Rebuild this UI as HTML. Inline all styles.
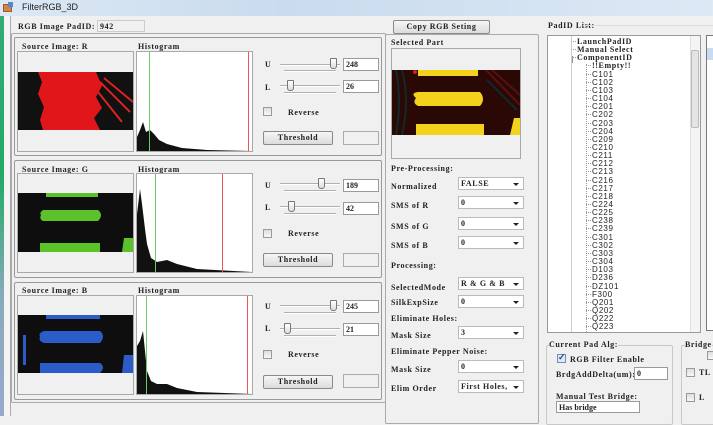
<!DOCTYPE html>
<html><head><meta charset="utf-8"><style>
*{margin:0;padding:0;box-sizing:border-box}
body{width:713px;height:416px;overflow:hidden;background:#f0f0f0;position:relative;font-family:"Liberation Serif",serif;font-weight:bold;font-size:8px;color:#222}
div,span,svg{position:absolute}
.t{white-space:nowrap;line-height:9px;letter-spacing:0.6px}
.box{border:1px solid #a8a8a8;background:#f0f0f0}
.grp{border:1px solid #c8c8c8;border-radius:2px}
.in{background:#fff;border:1px solid #9a9a9a;font-size:8px;padding-left:2px;line-height:11px}
.btn{border:1px solid #8a8a8a;border-radius:2px;background:linear-gradient(#f6f6f6,#dcdcdc);text-align:center;line-height:12px;letter-spacing:0.6px}
.trk{height:2px;border-top:1px solid #b0b0b0;border-bottom:1px solid #fff}
.thumb{width:7px;height:11px;border:1px solid #777;border-radius:1px 1px 3px 3px;background:linear-gradient(#fff,#ddd)}
.cb{width:9px;height:9px;border:1px solid #9a9a9a;background:linear-gradient(#ddd,#f8f8f8)}
.cmb{background:#fff;border:1px solid #bbb;height:13px}
.cmb span{left:2px;top:1px}
.cmb i{position:absolute;right:4px;top:5px;border-left:3px solid transparent;border-right:3px solid transparent;border-top:3px solid #222}
</style></head><body>
<!-- title bar -->
<div style="left:0;top:0;width:713px;height:16px;background:linear-gradient(90deg,#dce8f4,#c9dbee 40%,#dde9f5)"></div>
<div style="left:3px;top:4px;width:9px;height:8px;background:#c84;border:1px solid #a53"></div>
<div style="left:8px;top:2px;width:5px;height:5px;background:#58c"></div>
<span class="t" style="left:22px;top:3px;font-family:'Liberation Sans',sans-serif;font-weight:normal;font-size:9px;letter-spacing:0">FilterRGB_3D</span>
<div style="left:0;top:16px;width:4px;height:400px;background:linear-gradient(#3a7,#2a6 40%,#8ab 70%,#9ac)"></div>
<div style="left:4px;top:16px;width:7px;height:400px;background:#f4f4f4;border-right:1px solid #aaa"></div>

<span class="t" style="left:18px;top:22px">RGB Image PadID:</span>
<div style="left:97px;top:20px;width:48px;height:12px;border:1px solid #ccc;background:#f0f0f0"></div>
<span class="t" style="left:100px;top:22px">942</span>

<!-- outer left frame -->
<div class="grp" style="left:11px;top:33px;width:375px;height:370px;border-color:#aaa"></div>

<!-- Panel R -->
<div class="grp" style="left:14px;top:37px;width:368px;height:119px;border-color:#999"></div>
<span class="t" style="left:22px;top:42px">Source Image: R</span>
<span class="t" style="left:138px;top:42px">Histogram</span>
<div class="box" style="left:17px;top:51px;width:117px;height:101px"></div>
<svg style="left:18px;top:72px" width="115" height="58"><rect width="115" height="58" fill="#e0161a"/><path d="M0 0H20L24 10 20 22 26 35 22 48 25 58H0Z M78 0H115V58H82L76 46 84 36 78 25 84 14Z" fill="#111"/><path d="M82 10L112 40M86 6L115 30M80 20L104 50" stroke="#d22" stroke-width="2"/></svg>
<div class="box" style="left:136px;top:51px;width:117px;height:101px;background:#fff"></div>
<svg style="left:137px;top:52px" width="115" height="99"><path d="M0 99V85L3 78 6 70 9 80 13 78 17 82 22 88 30 92 45 96 70 98 115 99Z" fill="#111"/><line x1="12.5" y1="0" x2="12.5" y2="99" stroke="#6c6"/><line x1="111.5" y1="0" x2="111.5" y2="99" stroke="#e55"/></svg>
<span class="t" style="left:265px;top:60px">U</span>
<div class="trk" style="left:280px;top:64px;width:60px"></div><div class="trk" style="left:284px;top:70px;width:52px"></div>
<div class="thumb" style="left:330px;top:58px"></div>
<div class="in" style="left:343px;top:58px;width:36px;height:13px">248</div>
<span class="t" style="left:265px;top:83px">L</span>
<div class="trk" style="left:280px;top:85px;width:60px"></div><div class="trk" style="left:284px;top:92px;width:52px"></div>
<div class="thumb" style="left:287px;top:80px"></div>
<div class="in" style="left:343px;top:80px;width:36px;height:13px">26</div>
<div class="cb" style="left:263px;top:107px"></div>
<span class="t" style="left:288px;top:108px">Reverse</span>
<div class="btn" style="left:263px;top:131px;width:70px;height:14px">Threshold</div>
<div style="left:343px;top:131px;width:36px;height:14px;border:1px solid #aaa"></div>

<!-- Panel G -->
<div class="grp" style="left:14px;top:160px;width:368px;height:118px;border-color:#999"></div>
<span class="t" style="left:22px;top:165px">Source Image: G</span>
<span class="t" style="left:138px;top:165px">Histogram</span>
<div class="box" style="left:17px;top:173px;width:117px;height:100px"></div>
<svg style="left:18px;top:193px" width="115" height="59"><rect width="115" height="59" fill="#0e0e0e"/><path d="M28 0H80V4H28Z M23 22Q21 20 25 17H80Q86 22 80 28H25Q21 26 23 22Z M22 50H82V59H22Z M106 45H115V59H104Z" fill="#5cc22a"/></svg>
<div class="box" style="left:136px;top:173px;width:117px;height:100px;background:#fff"></div>
<svg style="left:137px;top:174px" width="115" height="98"><path d="M0 98V40L3 15 5 30 8 55 10 70 14 84 20 88 30 86 40 90 60 95 115 98Z" fill="#111"/><line x1="18.5" y1="0" x2="18.5" y2="98" stroke="#6c6"/><line x1="85.5" y1="0" x2="85.5" y2="98" stroke="#e55"/></svg>
<span class="t" style="left:265px;top:181px">U</span>
<div class="trk" style="left:280px;top:183px;width:60px"></div><div class="trk" style="left:284px;top:190px;width:52px"></div>
<div class="thumb" style="left:318px;top:178px"></div>
<div class="in" style="left:343px;top:179px;width:36px;height:13px">189</div>
<span class="t" style="left:265px;top:203px">L</span>
<div class="trk" style="left:280px;top:206px;width:60px"></div><div class="trk" style="left:284px;top:213px;width:52px"></div>
<div class="thumb" style="left:288px;top:201px"></div>
<div class="in" style="left:343px;top:202px;width:36px;height:13px">42</div>
<div class="cb" style="left:263px;top:229px"></div>
<span class="t" style="left:288px;top:229px">Reverse</span>
<div class="btn" style="left:263px;top:253px;width:70px;height:14px">Threshold</div>
<div style="left:343px;top:253px;width:36px;height:14px;border:1px solid #aaa"></div>

<!-- Panel B -->
<div class="grp" style="left:14px;top:282px;width:368px;height:118px;border-color:#999"></div>
<span class="t" style="left:22px;top:286px">Source Image: B</span>
<span class="t" style="left:138px;top:286px">Histogram</span>
<div class="box" style="left:17px;top:295px;width:117px;height:100px"></div>
<svg style="left:18px;top:315px" width="115" height="58"><rect width="115" height="58" fill="#0e0e0e"/><path d="M28 0H82V4H28Z M22 22Q20 18 26 16H82Q88 21 82 28H26Q20 26 22 22Z M22 48H82Q88 52 82 58H22Z M106 40H115V58H104Z M5 20h3v30h-3Z" fill="#2c5cc8"/></svg>
<div class="box" style="left:136px;top:295px;width:117px;height:100px;background:#fff"></div>
<svg style="left:137px;top:296px" width="115" height="98"><path d="M0 98V50L3 45 6 35 8 55 10 75 14 85 20 88 30 88 40 92 60 96 115 98Z" fill="#111"/><line x1="9.5" y1="0" x2="9.5" y2="98" stroke="#6c6"/><line x1="110.5" y1="0" x2="110.5" y2="98" stroke="#e55"/></svg>
<span class="t" style="left:265px;top:302px">U</span>
<div class="trk" style="left:280px;top:305px;width:60px"></div><div class="trk" style="left:284px;top:312px;width:52px"></div>
<div class="thumb" style="left:330px;top:300px"></div>
<div class="in" style="left:343px;top:300px;width:36px;height:13px">245</div>
<span class="t" style="left:265px;top:324px">L</span>
<div class="trk" style="left:280px;top:328px;width:60px"></div><div class="trk" style="left:284px;top:335px;width:52px"></div>
<div class="thumb" style="left:284px;top:323px"></div>
<div class="in" style="left:343px;top:323px;width:36px;height:13px">21</div>
<div class="cb" style="left:263px;top:350px"></div>
<span class="t" style="left:288px;top:350px">Reverse</span>
<div class="btn" style="left:263px;top:375px;width:70px;height:14px">Threshold</div>
<div style="left:343px;top:374px;width:36px;height:14px;border:1px solid #aaa"></div>

<!-- middle column -->
<div class="btn" style="left:393px;top:20px;width:97px;height:14px">Copy RGB Seting</div>
<div class="grp" style="left:385px;top:34px;width:154px;height:390px;border-color:#aaa"></div>
<span class="t" style="left:391px;top:38px">Selected Part</span>
<div class="box" style="left:391px;top:48px;width:130px;height:111px"></div>
<svg style="left:392px;top:70px" width="128" height="65"><rect width="128" height="65" fill="#2a0805"/><path d="M4 0Q10 30 4 65M10 0Q18 30 10 65M95 10L125 40" stroke="#102a28" stroke-width="2" fill="none"/><path d="M94 0L128 35M100 0L128 25" stroke="#5a1010" stroke-width="2"/><path d="M26 0H86V6H26Z M24 28Q18 23 26 22H88Q94 29 88 36H26Q20 33 24 28Z M24 54H92V65H24Z M122 48H128V65H118Z" fill="#f2d21a"/><circle cx="23" cy="2" r="2" fill="#c22"/></svg>
<span class="t" style="left:391px;top:164px">Pre-Processing:</span>
<span class="t" style="left:391px;top:182px">Normalized</span>
<div class="cmb" style="left:458px;top:177px;width:66px"><span class="t">FALSE</span><i></i></div>
<span class="t" style="left:391px;top:201px">SMS of R</span>
<div class="cmb" style="left:458px;top:196px;width:66px"><span class="t">0</span><i></i></div>
<span class="t" style="left:391px;top:222px">SMS of G</span>
<div class="cmb" style="left:458px;top:217px;width:66px"><span class="t">0</span><i></i></div>
<span class="t" style="left:391px;top:241px">SMS of B</span>
<div class="cmb" style="left:458px;top:236px;width:66px"><span class="t">0</span><i></i></div>
<span class="t" style="left:391px;top:261px">Processing:</span>
<span class="t" style="left:391px;top:283px">SelectedMode</span>
<div class="cmb" style="left:458px;top:277px;width:66px"><span class="t">R &amp; G &amp; B</span><i></i></div>
<span class="t" style="left:391px;top:298px">SilkExpSize</span>
<div class="cmb" style="left:458px;top:295px;width:66px"><span class="t">0</span><i></i></div>
<span class="t" style="left:391px;top:314px">Eliminate Holes:</span>
<span class="t" style="left:391px;top:331px">Mask Size</span>
<div class="cmb" style="left:458px;top:326px;width:66px"><span class="t">3</span><i></i></div>
<span class="t" style="left:391px;top:347px">Eliminate Pepper Noise:</span>
<span class="t" style="left:391px;top:365px">Mask Size</span>
<div class="cmb" style="left:458px;top:360px;width:66px"><span class="t">0</span><i></i></div>
<span class="t" style="left:391px;top:384px">Elim Order</span>
<div class="cmb" style="left:458px;top:380px;width:66px"><span class="t">First Holes,</span><i></i></div>

<!-- right column -->
<span class="t" style="left:548px;top:21px">PadID List:</span>
<div style="left:583px;top:25px;width:130px;height:1px;background:#ddd"></div>
<div style="left:547px;top:35px;width:154px;height:298px;background:#fff;border:1px solid #9a9a9a"></div>
<div style="left:571px;top:36px;width:1px;height:296px;background:#ccc"></div>
<div style="left:690px;top:36px;width:10px;height:296px;background:#f4f4f4;border-left:1px solid #e0e0e0"></div>
<div style="left:691px;top:50px;width:8px;height:78px;background:#e4e4e4;border:1px solid #bbb;border-radius:2px"></div>
<div style="left:706px;top:35px;width:7px;height:296px;background:#fff;border:1px solid #777;border-right:none"></div>
<div style="left:707px;top:48px;width:6px;height:12px;background:#c6dcf2"></div>
<div id="tree" style="left:572px;top:36px;width:118px;height:296px;overflow:hidden"></div>

<div class="grp" style="left:546px;top:345px;width:127px;height:80px"></div>
<span class="t" style="left:549px;top:340px;background:#f0f0f0">Current Pad Alg:</span>
<div class="cb" style="left:557px;top:354px;background:#dfe9f5;border-color:#7a8ab0"></div>
<span style="left:558px;top:352px;font-size:9px;color:#2a4a9a">✓</span>
<span class="t" style="left:570px;top:355px">RGB Filter Enable</span>
<span class="t" style="left:556px;top:370px">BrdgAddDelta(um):</span>
<div class="in" style="left:634px;top:367px;width:34px;height:13px">0</div>
<span class="t" style="left:556px;top:392px">Manual Test Bridge:</span>
<div class="in" style="left:556px;top:401px;width:84px;height:12px">Has bridge</div>
<div class="grp" style="left:681px;top:345px;width:40px;height:80px"></div>
<span class="t" style="left:685px;top:340px;background:#f0f0f0">Bridge</span>
<div class="cb" style="left:707px;top:351px"></div>
<div class="cb" style="left:686px;top:368px"></div><span class="t" style="left:699px;top:368px">TL</span>
<div class="cb" style="left:686px;top:393px"></div><span class="t" style="left:699px;top:393px">L</span>

<script>
var items=[[5,'LaunchPadID'],[5,'Manual Select'],[5,'ComponentID'],[20,'!!Empty!!'],'C101','C102','C103','C104','C201','C202','C203','C204','C209','C210','C211','C212','C213','C216','C217','C218','C224','C225','C238','C239','C301','C302','C303','C304','D103','D236','DZ101','F300','Q201','Q202','Q222','Q223'];
var h='';
for(var i=0;i<items.length;i++){var it=items[i],x=20,s=it;if(typeof it!='string'){x=it[0];s=it[1];}
var y=1+i*8.15;
h+='<div style="left:'+(x-6)+'px;top:'+(y+4)+'px;width:5px;height:1px;border-top:1px dotted #999"></div>';
h+='<span class="t" style="left:'+x+'px;top:'+y+'px;'+(x==20&&i>3?'font-weight:normal;font-family:\'Liberation Sans\',sans-serif':'')+'">'+s+'</span>';}
h+='<div style="left:14px;top:28px;width:1px;height:270px;border-left:1px dotted #999"></div>';
h+='<div style="left:-6px;top:20px;width:7px;height:7px;border:1px solid #999;background:#fff;font-size:7px;line-height:5px;text-align:center">-</div>';
document.getElementById('tree').innerHTML=h;
</script>
</body></html>
